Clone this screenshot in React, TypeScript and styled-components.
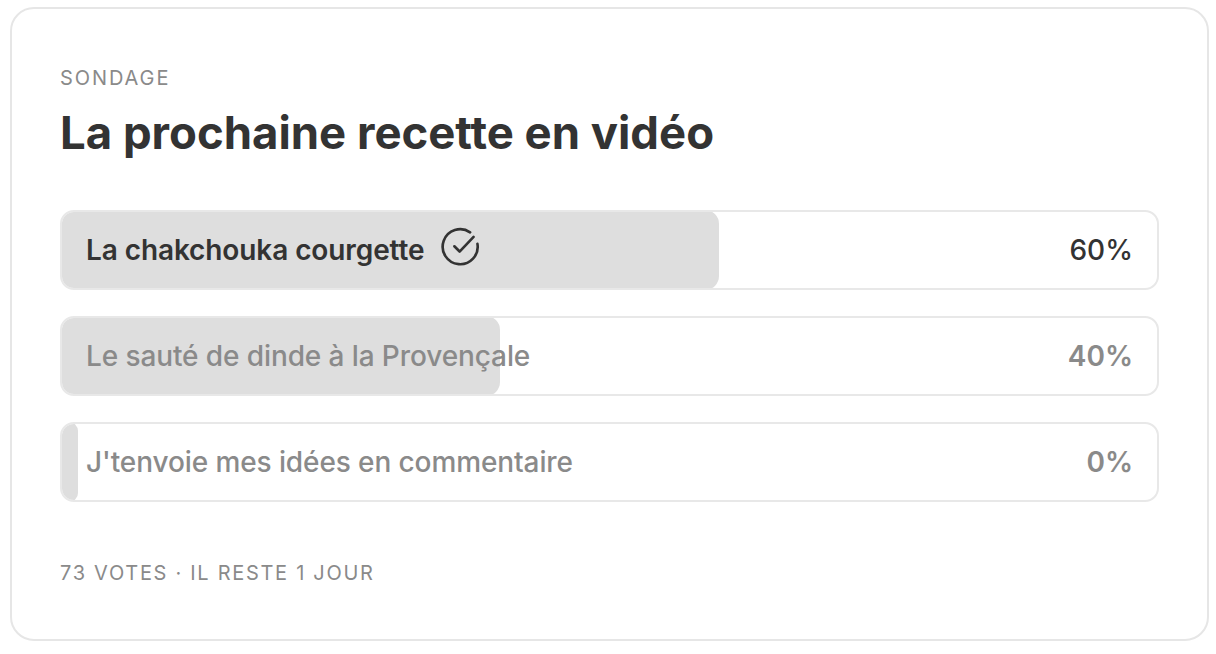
import React from "react";
import styled, { createGlobalStyle } from "styled-components";

const Global = createGlobalStyle`
  html, body { margin: 0; padding: 0; background: #ffffff; }
  body { font-family: Inter, "Noto Sans", "Liberation Sans", sans-serif; -webkit-font-smoothing: antialiased; }
  * { box-sizing: border-box; }
`;

const Page = styled.div`
  padding: 7px 7px 0 10px;
`;

const Card = styled.section`
  width: 1199px;
  height: 634px;
  border: 2px solid #e6e6e6;
  border-radius: 24px;
  padding: 58px 48px 0 48px;
  display: flex;
  flex-direction: column;
`;

const Eyebrow = styled.div`
  font-size: 20px;
  line-height: 22px;
  letter-spacing: 1.9px;
  color: #8a8a8a;
  font-weight: 400;
`;

const Title = styled.h1`
  margin: 18px 0 0 0;
  font-size: 45.5px;
  line-height: 52px;
  font-weight: 700;
  color: #333333;
  letter-spacing: 0;
`;

const Options = styled.div`
  margin-top: 51px;
  display: flex;
  flex-direction: column;
  gap: 26px;
`;

const Option = styled.div`
  position: relative;
  height: 80px;
  border: 2px solid #e8e8e8;
  border-radius: 14px;
  overflow: hidden;
  display: flex;
  align-items: center;
  justify-content: space-between;
  padding: 0 24px;
`;

const Fill = styled.div`
  position: absolute;
  left: -2px;
  top: -2px;
  bottom: -2px;
  min-width: 18px;
  background: #dedede;
  border-radius: 14px;
`;

const Label = styled.span<{ $selected?: boolean }>`
  position: relative;
  display: flex;
  align-items: center;
  gap: 15px;
  font-size: 28px;
  letter-spacing: -0.1px;
  font-weight: ${(p) => (p.$selected ? 600 : 500)};
  color: ${(p) => (p.$selected ? "#333333" : "#8a8a8a")};
`;

const Percent = styled.span<{ $selected?: boolean }>`
  position: relative;
  font-size: 28px;
  font-weight: ${(p) => (p.$selected ? 500 : 600)};
  color: ${(p) => (p.$selected ? "#333333" : "#8a8a8a")};
`;

const Footer = styled.div`
  margin-top: 60px;
  font-size: 20px;
  line-height: 22px;
  letter-spacing: 1.7px;
  color: #8a8a8a;
`;

const IconWrap = styled.span`
  display: inline-flex;
  transform: translateY(-3px);
`;

const CheckIcon = () => (
  <IconWrap>
    <svg width="42" height="42" viewBox="0 0 24 24" fill="none" stroke="#333333" strokeWidth="1.5" strokeLinecap="round" strokeLinejoin="round">
      <path d="M21.4 10.2A10 10 0 1 1 17.2 3.6" />
      <path d="m8.2 11.6 3 3 8-8.4" />
    </svg>
  </IconWrap>
);

const options = [
  { label: "La chakchouka courgette", pct: 60, selected: true },
  { label: "Le sauté de dinde à la Provençale", pct: 40 },
  { label: "J'tenvoie mes idées en commentaire", pct: 0 },
];

export default function App() {
  return (
    <>
      <Global />
      <Page>
        <Card>
          <Eyebrow>SONDAGE</Eyebrow>
          <Title>La prochaine recette en vidéo</Title>
          <Options>
            {options.map((o) => (
              <Option key={o.label}>
                <Fill style={{ width: `calc(${o.pct}% + ${o.pct > 0 ? 2 : 0}px)` }} />
                <Label $selected={o.selected}>
                  {o.label}
                  {o.selected && <CheckIcon />}
                </Label>
                <Percent $selected={o.selected}>{o.pct}%</Percent>
              </Option>
            ))}
          </Options>
          <Footer>73 VOTES · IL RESTE 1 JOUR</Footer>
        </Card>
      </Page>
    </>
  );
}
